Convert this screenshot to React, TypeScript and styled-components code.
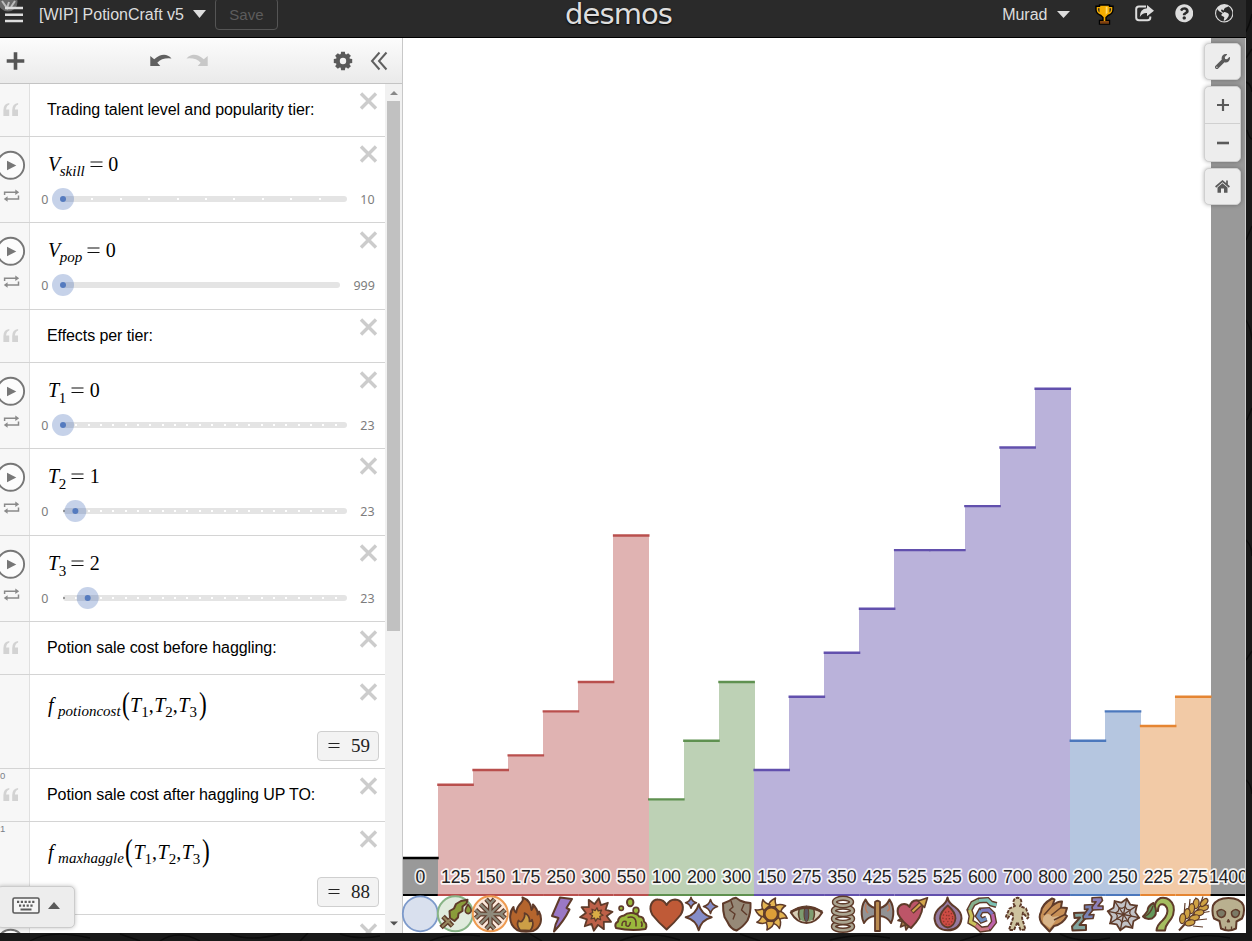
import React from "react";
import styled, { createGlobalStyle } from "styled-components";
import { FaWrench, FaQuestionCircle } from "react-icons/fa";
import { BsGlobeAmericas } from "react-icons/bs";

const sans = `"Liberation Sans", Arial, sans-serif`;
const serif = `"Liberation Serif", "Times New Roman", serif`;

const Global = createGlobalStyle`
  * { box-sizing: border-box; }
  body { margin: 0; background: #191919; overflow: hidden; font-family: ${sans}; }
  svg { display: block; flex: none; }
`;

/* ---------- frame ---------- */
const Screen = styled.div`
  position: relative;
  width: 1252px;
  height: 941px;
  overflow: hidden;
  background: #191919;
`;
const Texture = styled.svg`
  position: absolute;
  inset: 0;
`;
const Window = styled.div`
  position: relative;
  width: 1246px;
  height: 933px;
  display: flex;
  flex-direction: column;
  overflow: hidden;
  background: #fff;
`;
const Main = styled.main`
  flex: 1;
  min-height: 0;
  display: flex;
`;

/* ---------- header ---------- */
const Header = styled.header`
  height: 38px;
  flex: none;
  display: grid;
  grid-template-columns: 1fr 114px 1fr;
  background: #2a2a2a;
  border-bottom: 1px solid #000;
  color: #ddd;
`;
const HeaderLeft = styled.div`
  display: flex;
  align-items: flex-start;
`;
const HeaderRight = styled.div`
  display: flex;
  align-items: flex-start;
  justify-content: flex-end;
`;
const HeaderText = styled.span<{ $left: number }>`
  font-size: 16px;
  line-height: 18px;
  margin: 6px 0 0 ${(p) => p.$left}px;
  white-space: nowrap;
`;
const SaveButton = styled.button`
  width: 63px;
  height: 32px;
  margin: -2px 0 0 9px;
  padding: 1px 0 0;
  border: 1px solid #555;
  border-radius: 4px;
  background: transparent;
  color: #5c5c5c;
  font: 15px ${sans};
`;
const Logo = styled.div`
  font-family: "DejaVu Sans", sans-serif;
  font-size: 29px;
  line-height: 36px;
  letter-spacing: -0.9px;
  margin: -4px 0 0 -1px;
  color: #dedede;
  text-shadow: 0 1px 2px #000;
`;
const HeaderIcon = styled.span<{ $left: number; $top: number }>`
  margin: ${(p) => p.$top}px 0 0 ${(p) => p.$left}px;
`;

/* ---------- expression panel ---------- */
const Panel = styled.section`
  width: 403px;
  flex: none;
  display: flex;
  flex-direction: column;
  border-right: 1px solid #c8c8c8;
`;
const Toolbar = styled.div`
  height: 46px;
  flex: none;
  display: flex;
  align-items: center;
  padding-left: 6px;
  background: linear-gradient(#fcfcfc, #eaeaea);
  border-bottom: 1px solid #c4c4c4;
`;
const ToolIcon = styled.span<{ $left?: number }>`
  margin-left: ${(p) => p.$left ?? 0}px;
`;
const ListArea = styled.div`
  flex: 1;
  min-height: 0;
  display: flex;
`;
const List = styled.div`
  width: 385px;
  overflow: hidden;
`;
const Row = styled.div<{ $h: number }>`
  height: ${(p) => p.$h}px;
  display: flex;
  border-bottom: 1px solid #d4d4d4;
`;
const Gutter = styled.div`
  width: 30px;
  flex: none;
  position: relative;
  background: #f7f7f7;
  border-right: 1px solid #e0e0e0;
`;
const RowNumber = styled.span`
  position: absolute;
  left: 0;
  top: 1px;
  font-size: 9.5px;
  line-height: 11px;
  color: #7a7f88;
`;
const Body = styled.div`
  flex: 1;
  min-width: 0;
  display: flex;
  flex-direction: column;
`;
const BodyTop = styled.div`
  display: flex;
  justify-content: space-between;
  height: 52px;
  flex: none;
`;
const CloseSlot = styled.span`
  padding: 8px 7px 0 0;
`;
const NoteText = styled.p`
  margin: 16px 0 0 17px;
  font-size: 16px;
  line-height: 19px;
  letter-spacing: -0.08px;
  color: #000;
  white-space: nowrap;
`;
const Formula = styled.div<{ $top: number; $left: number }>`
  display: flex;
  align-items: baseline;
  height: 24px;
  margin: ${(p) => p.$top}px 0 0 ${(p) => p.$left}px;
  font: 20px/24px ${serif};
  color: #000;
  white-space: nowrap;
`;
const Var = styled.i<{ $l?: number }>`
  margin-left: ${(p) => p.$l ?? 0}px;
`;
const Sub = styled.span<{ $italic?: boolean; $l?: number }>`
  position: relative;
  top: ${(p) => (p.$italic ? 4.5 : 5.5)}px;
  font-size: 15px;
  font-style: ${(p) => (p.$italic ? "italic" : "normal")};
  margin-left: ${(p) => p.$l ?? 0}px;
`;
const Equals = styled.svg`
  margin: 0 5.5px 0 5px;
  align-self: center;
`;
const Paren = styled.span<{ $l: number }>`
  position: relative;
  top: 2.5px;
  font-size: 31px;
  line-height: 20px;
  width: 8px;
  transform: scaleX(0.75);
  margin-left: ${(p) => p.$l}px;
`;
const SliderLine = styled.div`
  display: flex;
  height: 22px;
  margin-top: -1px;
  align-items: center;
  justify-content: space-between;
  padding: 0 10px 0 11px;
  font: 13px/22px "Noto Sans", sans-serif;
  color: #7d7d7d;
`;
const Bound = styled.span`
  display: inline-block;
  transform: scaleX(0.96);
`;
const Track = styled.svg`
  overflow: visible;
  margin: 0 auto 0 15px;
`;
const Result = styled.div<{ $top: number }>`
  align-self: flex-end;
  width: 62px;
  height: 30px;
  margin: ${(p) => p.$top}px 6px 0 0;
  display: flex;
  align-items: center;
  justify-content: space-between;
  padding: 0 8px 1px 10px;
  background: #f3f3f3;
  border: 1px solid #cfcfcf;
  border-radius: 4px;
  font: 19px/26px ${serif};
  color: #222;
`;
const Scrollbar = styled.div`
  width: 17px;
  background: #f1f1f1;
  display: flex;
  flex-direction: column;
  align-items: center;
  justify-content: space-between;
  padding: 6px 0 7px;
`;
const Thumb = styled.div`
  width: 13px;
  height: 530px;
  margin: 5px 0 auto;
  background: #c1c1c1;
`;
const Keypad = styled.button`
  position: absolute;
  left: -3px;
  top: 886px;
  width: 78px;
  height: 42px;
  padding: 0 0 3px 14px;
  display: flex;
  align-items: center;
  gap: 8px;
  background: #ededed;
  border: 1px solid #ccc;
  border-radius: 5px;
  box-shadow: 0 0 4px rgba(0, 0, 0, 0.25);
`;

/* ---------- graph ---------- */
const Graph = styled.section`
  flex: 1;
  min-width: 0;
  display: flex;
  flex-direction: column;
  position: relative;
  background: #fff;
`;
const IconStrip = styled.div`
  display: flex;
  flex: 1;
`;
const Glyph = styled.svg`
  width: 35.125px;
  height: 37px;
  overflow: visible;
`;
const GraphTools = styled.div`
  position: absolute;
  top: 5px;
  right: 5px;
  display: flex;
  flex-direction: column;
  gap: 6px;
`;
const ToolGroup = styled.div`
  width: 37px;
  background: #ededed;
  border: 1px solid #d0d0d0;
  border-radius: 5px;
  box-shadow: 0 0 4px rgba(0, 0, 0, 0.3);
  color: #5a5a5a;
`;
const ToolButton = styled.div<{ $h?: number }>`
  height: ${(p) => p.$h ?? 35}px;
  display: flex;
  align-items: center;
  justify-content: center;
  & + & { border-top: 1px solid #d0d0d0; }
`;

/* ---------- small drawings ---------- */
const Close = () => (
  <CloseSlot>
    <svg width="19" height="18" viewBox="0 0 19 18">
      <path d="M2 1.5 17 16.5M17 1.5 2 16.5" stroke="#ccc" strokeWidth="3.4" />
    </svg>
  </CloseSlot>
);
const QuoteMark = () => (
  <svg width="30" height="52" viewBox="0 0 30 52">
    <g fill="#d3d3d3">
      <path d="M9.3 19v1.6Q6.4 21.6 6.1 25.5H9.2V32H3.4V26Q3.5 19.5 9.3 19Z" />
      <path d="M18.1 19v1.6Q15.2 21.6 14.9 25.5H18V32H12.2V26Q12.3 19.5 18.1 19Z" />
    </g>
  </svg>
);
const PlayControls = () => (
  <svg width="29" height="80" viewBox="0 0 29 80">
    <circle cx="10.6" cy="28.3" r="13.5" fill="#fcfcfc" stroke="#777" strokeWidth="1.9" />
    <path d="M7 23.8 16.3 28.5 7 33.2Z" fill="#777" />
    <g fill="none" stroke="#8a8a8a" strokeWidth="1.5">
      <path d="M4.6 58V55.3H17M18.5 58.5V62H6" />
    </g>
    <path d="M15.3 52.5 19.2 55.3 15.3 58ZM7.6 59.3 3.8 62 7.6 64.8Z" fill="#8a8a8a" />
  </svg>
);
const EqualSign = () => (
  <Equals width="13" height="8" viewBox="0 0 13 8">
    <path d="M.5 2H12.5M.5 6.5H12.5" stroke="#111" strokeWidth="1.1" />
  </Equals>
);

/* ---------- rows ---------- */
const Note = ({ text, num }: { text: string; num?: string }) => (
  <Row $h={53}>
    <Gutter>
      {num && <RowNumber>{num}</RowNumber>}
      <QuoteMark />
    </Gutter>
    <Body>
      <BodyTop>
        <NoteText>{text}</NoteText>
        <Close />
      </BodyTop>
    </Body>
  </Row>
);

type SliderProps = { h: number; v: string; sub: string; italic?: boolean; value: number; max: number; width?: number; ticks?: boolean };
const Slider = ({ h, v, sub, italic, value, max, width = 284, ticks = true }: SliderProps) => {
  const x = (value * width) / max;
  return (
    <Row $h={h}>
      <Gutter><PlayControls /></Gutter>
      <Body>
        <BodyTop>
          <Formula $top={15} $left={18}>
            <Var>{v}</Var>
            <Sub $italic={italic} $l={-0.5}>{sub}</Sub>
            <EqualSign />
            <span>{value}</span>
          </Formula>
          <Close />
        </BodyTop>
        <SliderLine>
          <Bound>0</Bound>
          <Track width={width} height="22">
            <rect y="8" width={width} height="6" rx="3" fill="#e4e4e4" />
            {ticks &&
              Array.from({ length: max - 1 }, (_, i) => (
                <rect key={i} x={Math.round(((i + 1) * width) / max)} y="10" width="2" height="2" fill="#fff" />
              ))}
            {value > 0 && <rect x="0" y="10" width="2" height="2" fill="#999" />}
            <circle cx={x} cy="11" r="11" fill="#2d5aae" fillOpacity=".27" />
            <circle cx={x} cy="11" r="3" fill="#557bbf" />
          </Track>
          <Bound>{max}</Bound>
        </SliderLine>
      </Body>
    </Row>
  );
};

const Call = ({ h, name, result, num }: { h: number; name: string; result: number; num?: string }) => (
  <Row $h={h}>
    <Gutter>{num && <RowNumber>{num}</RowNumber>}</Gutter>
    <Body>
      <BodyTop>
        <Formula $top={16.5} $left={18}>
          <Var>f</Var>
          <Sub $italic $l={4.5}>{name}</Sub>
          <Paren $l={0.5}>(</Paren>
          <Var $l={1}>T</Var><Sub>1</Sub><span>,</span>
          <Var $l={0.5}>T</Var><Sub>2</Sub><span>,</span>
          <Var $l={0.5}>T</Var><Sub>3</Sub>
          <Paren $l={1}>)</Paren>
        </Formula>
        <Close />
      </BodyTop>
      <Result $top={h === 94 ? 4 : 3}>
        <svg width="12" height="8" viewBox="0 0 12 8"><path d="M.5 1.5H11.5M.5 5.5H11.5" stroke="#222" strokeWidth="1.1" /></svg>
        <span>{result}</span>
      </Result>
    </Body>
  </Row>
);

/* ---------- chart ---------- */
const palette: Record<string, [string, string]> = {
  k: ["#999999", "#000000"],
  r: ["#e0b3b2", "#b94f4d"],
  g: ["#bdd1b5", "#5f9150"],
  p: ["#bab2da", "#6250ad"],
  b: ["#b5c6e0", "#4c78bd"],
  o: ["#f2caa6", "#e58532"],
};
const bars: [number, string][] = [
  [0, "k"], [125, "r"], [150, "r"], [175, "r"], [250, "r"], [300, "r"], [550, "r"],
  [100, "g"], [200, "g"], [300, "g"],
  [150, "p"], [275, "p"], [350, "p"], [425, "p"], [525, "p"], [525, "p"], [600, "p"], [700, "p"], [800, "p"],
  [200, "b"], [250, "b"], [225, "o"], [275, "o"], [1400, "k"],
];
const COL = 35.13;
const LEFT = -0.4;
const Chart = () => (
  <svg width="843" height="858" viewBox="0 38 843 858">
    {bars.map(([v, c], i) => {
      const y = 858 - 0.5865 * v;
      const x = i * COL + LEFT;
      return (
        <g key={i}>
          <rect x={x} y={y} width={COL + 0.7} height={896.5 - y} fill={palette[c][0]} shapeRendering="crispEdges" />
          <path d={`M${x} 895H${x + COL + 0.7}`} stroke={palette[c][1]} strokeWidth="2.2" />
        </g>
      );
    })}
    {bars.map(([v, c], i) => (
      <path key={i} d={`M${i * COL + LEFT - 0.5} ${858 - 0.5865 * v}H${(i + 1) * COL + LEFT + 1}`} stroke={palette[c][1]} strokeWidth="2.4" />
    ))}
    <g fontFamily="Liberation Sans, Arial, sans-serif" fontSize="17.7" letterSpacing="-0.2" textAnchor="middle" fill="#222" stroke="#fff" strokeOpacity=".85" strokeWidth="3.4" strokeLinejoin="round" paintOrder="stroke">
      {bars.map(([v], i) => (
        <text key={i} x={(i + 0.5) * COL - 0.2} y="882.7">{v}</text>
      ))}
    </g>
    <path d="M842.5 38V896" stroke="#ccc" strokeWidth="1" />
  </svg>
);

/* ---------- potion effect glyphs ---------- */
const ink = "#5f3b2a";
const star = (cx: number, cy: number, n: number, R: number, r: number, rot = 0) =>
  Array.from({ length: n * 2 }, (_, i) => {
    const a = (Math.PI * i) / n + rot - Math.PI / 2;
    const d = i % 2 ? r : R;
    return `${(cx + d * Math.cos(a)).toFixed(2)},${(cy + d * Math.sin(a)).toFixed(2)}`;
  }).join(" ");
const sparkle = (x: number, y: number, r: number) =>
  `M${x} ${y - r}Q${x + r * 0.2} ${y - r * 0.2} ${x + r} ${y}Q${x + r * 0.2} ${y + r * 0.2} ${x} ${y + r}Q${x - r * 0.2} ${y + r * 0.2} ${x - r} ${y}Q${x - r * 0.2} ${y - r * 0.2} ${x} ${y - r}Z`;
const ring = (n: number, off = 0) => Array.from({ length: n }, (_, i) => (360 / n) * i + off);
const flake = ring(8).map((a, i) => ({ a, d: i % 2 ? "M0 0V-14" : "M0 0V-11M-4.2-14.8 0-10.2 4.2-14.8" }));

const glyphs: React.ReactNode[] = [
  <circle cx="17.3" cy="17.8" r="17.5" fill="#d9e0ee" stroke="#7d9acb" strokeWidth="1.8" />,
  <>
    <circle cx="17.3" cy="17.8" r="17.5" fill="#e0ebdd" stroke="#88b487" strokeWidth="2" />
    <path d="M12 22 11.5 15 16 12.5 18 8 23 5 29.5 3.8 28.5 7.5 24.5 10.5 24.5 15 20.5 17.5 20 21.5 16.5 25Z" fill="#8a9c3a" />
    <path d="M30 8.5Q34 13 33 15.5 30.5 19.5 27.5 16 26.5 13.5 30 8.5Z" fill="#8a9c3a" strokeWidth="1.6" />
    <path d="M3 31.5 12 23.5M5 20.5 14.5 30" strokeWidth="5" fill="none" />
    <path d="M4 30.7 12 23.5M5.4 21 14 29.5" strokeWidth="2" stroke="#96875f" fill="none" />
  </>,
  <>
    <circle cx="17.3" cy="17.8" r="17.5" fill="#fce9dc" stroke="#ee9a50" strokeWidth="2" />
    <g transform="translate(17.3 18)" fill="none">
      {flake.map(({ a, d }) => <path key={a} d={d} transform={`rotate(${a})`} strokeWidth="4.8" />)}
      {flake.map(({ a, d }) => <path key={a} d={d} transform={`rotate(${a})`} stroke="#8f8b7c" strokeWidth="2.4" />)}
    </g>
  </>,
  <>
    <path d="M9 34Q1.500 29 2.200 20 2.500 14.500 5.500 11 6 15.500 8.200 16.500 8.800 11 13 7 15.800 4.400 14.500 1.500 23 4.500 23.500 14 25.500 12 25 8.500 30 13.500 29.500 18.500 31 18 31 15.500 34 21 32.500 27 30.500 33 25 35Q16 37 9 34Z" fill="#b5652d" />
    <path d="M12 34Q8 29 10.500 24.500 13 27 14.500 24.500 17.500 20.500 16.500 17 22 19.500 21.500 25.500 24 25 24 23.500 26.500 30 22 34.500Z" fill="#cc9e46" strokeWidth="1.7" />
  </>,
  <path d="M16 1.5 28 3 22.5 12 25.5 13.5Q20 25 10 35.5 11 28 14.5 22L8 20Z" fill="#9a78c6" />,
  <>
    <polygon points={star(17.3, 18.5, 10, 16.5, 10.5, 0.15)} fill="#bd6048" strokeWidth="1.8" />
    <polygon points={star(17.3, 18.5, 8, 6.8, 4, 0.1)} fill="#d9ac45" strokeWidth="1.3" />
  </>,
  <>
    <path d="M2 32Q0 27.500 4 25.500 4.500 20 10 19.500 13 16.500 18 17 23.500 17.500 25 20.500 30 20.500 30 25.500 34 28 31.500 33 17 35.500 2 32Z" fill="#9ab83c" />
    <path d="M8 30Q7.500 24.500 12 25.500V29.500Q15.500 32 16.500 26M13.500 21.500Q22 19.500 22 27V30.500M27 25.500Q29 28 27.500 31" fill="none" strokeWidth="1.5" />
    <ellipse cx="16.200" cy="6.300" rx="3.200" ry="3.900" fill="#9ab83c" />
    <circle cx="7.200" cy="12.300" r="2.200" fill="#9ab83c" strokeWidth="1.600" />
    <ellipse cx="22" cy="14.600" rx="2.900" ry="3.200" fill="#9ab83c" strokeWidth="1.600" />
  </>,
  <path d="M17.6 33.5Q9 26 3.5 19 0 13 2.3 8 4.5 3.3 9 3.5 14.8 3.6 17.6 9 20.500 3.500 26 3.500 31.500 3.700 33.400 8.500 35 13.500 31.500 19 26 26 17.600 33.500Z" fill="#bf5a37" />,
  <>
    <path d={sparkle(14.7, 21.3, 13)} fill="#858dc9" />
    <path d={sparkle(7, 6.8, 5.5)} fill="#858dc9" strokeWidth="1.5" />
    <path d={sparkle(26.5, 10.5, 7)} fill="#858dc9" strokeWidth="1.6" />
  </>,
  <>
    <path d="M4 7.5Q10 5.5 14 2.5L17 1.7 21 4.5Q26 7 31.5 7 32 17 28.5 24.5 24 31 17.5 34.5 11.5 33 8.5 26L5.5 21Q3.8 15 4 7.5Z" fill="#968977" />
    <path d="M12 5 14 11 10.5 14 16 18 14 23.5M25 8 22.500 14 28 19" fill="none" strokeWidth="1.4" />
  </>,
  <>
    {ring(8, 10).map((a) => (
      <path key={a} d="M-4-7Q-5-12 1.500-16.500 1-12 4.500-8Z" transform={`translate(17.2 18) rotate(${a})`} fill="#e3b452" strokeWidth="1.5" />
    ))}
    <circle cx="17.2" cy="18" r="6.6" fill="#dd9e38" />
  </>,
  <>
    <path d="M1.8 16.5Q9 10.5 17.5 10.5 26 10.5 33.2 16.5 27 27 17.5 27 8 27 1.8 16.5Z" fill="#d8ccb4" />
    <ellipse cx="17.4" cy="18" rx="9" ry="7.6" fill="#7e9c70" stroke="none" />
    <ellipse cx="17.4" cy="18" rx="2.4" ry="7.8" fill="#5b5963" strokeWidth="1" />
    <path d="M10.5 12.5Q8.5 18 11 24M24.5 12.5Q26.5 18 24 24" fill="none" strokeWidth="1.4" />
    <path d="M1.8 16Q17 7.500 33.2 16" fill="none" strokeWidth="2.6" />
  </>,
  <g fill="none">
    {[30.5, 22.7, 14.7, 6].map((y, i) => (
      <React.Fragment key={y}>
        <ellipse cx="18" cy={y} rx={i === 3 ? 8.5 : 9.5} ry="3.7" strokeWidth="5.4" />
        <ellipse cx="18" cy={y} rx={i === 3 ? 8.5 : 9.5} ry="3.7" stroke="#aba591" strokeWidth="2.6" />
      </React.Fragment>
    ))}
  </g>,
  <>
    <path d="M15 12Q9 11 5.500 3.500 1 10 1.800 19 2 23 4 27 8 20.500 15 20ZM20 12Q26 11 29.500 3.500 34 10 33.200 19 33 23 31 27 27 20.500 20 20Z" fill="#929294" />
    <path d="M6 8Q4.500 14 8 17M28.500 8Q31 14 27 15" stroke="#c07a5a" strokeWidth="1.500" fill="none" />
    <path d="M15 6Q17.500 3.500 20 6V35H15Z" fill="#b98b50" strokeWidth="1.800" />
  </>,
  <>
    <path d="M10 20 3 24.5 7 25.5 5.500 31 10 29 11 34 17 26Z" fill="#a37d48" strokeWidth="1.6" />
    <path d="M16 32Q7 26 3 18 1.500 11 6.500 8.500 11.500 7 14.500 11 16 4.500 21.500 4.200 27 4.500 27.500 11 27 21 16 32Z" fill="#bd5568" />
    <path d="M17 16 25 8.500" strokeWidth="4.600" />
    <path d="M17.500 15.500 25.500 8" stroke="#d3a64c" strokeWidth="2.200" />
    <path d="M32.500 1.800 23 5 29.500 11.500Z" fill="#d3a64c" strokeWidth="1.600" />
  </>,
  <>
    <path d="M17.5 1.5Q18.5 7 25 11 31.7 16 31.5 22.5 30 34 17.8 34.3 5.5 34 4.5 22.5 4.5 16 10.5 11 16.5 7 17.5 1.5Z" fill="#957aa0" />
    <path d="M17.8 9.5Q25.500 16 25.500 22.500 24.500 30.500 17.800 31.500 11 30.500 10 22.500 10 16 17.800 9.500Z" fill="#cd4c44" strokeWidth="1.8" />
    <ellipse cx="17.8" cy="22" rx="4.8" ry="6.500" fill="none" stroke="#8a332c" strokeWidth="1.3" strokeDasharray="1.3 2" />
    <ellipse cx="17.8" cy="22" rx="1.6" ry="3.500" fill="none" stroke="#8a332c" strokeWidth="1.3" strokeDasharray="1.3 2" />
  </>,
  <g fill="none" strokeLinejoin="miter">
    <path d="M31.500 9 26 7.500 22.500 4 14 4.500 8 7.500 4.500 14 6.500 20 5.500 26 11 29 16 33.500 24 32.500 29 26 27.500 18 23.500 14 16 14.500 13 20 16.500 24.500 21.500 22.500" strokeWidth="6" />
    <path d="M31.500 9 26 7.500 22.500 4 14 4.500" stroke="#7cc1b4" strokeWidth="3.200" />
    <path d="M14 4.500 8 7.500 4.500 14" stroke="#86b08c" strokeWidth="3.200" />
    <path d="M4.500 14 6.500 20 5.500 26 11 29" stroke="#c9c05a" strokeWidth="3.200" />
    <path d="M11 29 16 33.500 24 32.500" stroke="#cf7a86" strokeWidth="3.200" />
    <path d="M24 32.500 29 26 27.500 18" stroke="#bd63aa" strokeWidth="3.200" />
    <path d="M27.500 18 23.500 14 16 14.500" stroke="#7d78c0" strokeWidth="3.200" />
    <path d="M16 14.500 13 20 16.500 24.500 21.500 22.500" stroke="#6f8fc0" strokeWidth="3.200" />
  </g>,
  <path d="M15 10Q13 8 13.5 5.2 14.5 1.7 17.5 1.8 20.8 2 21.3 5.2 21.5 8.3 20 10.2L26 12.5 29 20.5 27.5 22.5 23 16.5 22 22 25.5 33.5 20.5 34 17.5 26 14 34H9L13 22 12.5 16 7.5 22.5 6 20.5 9.5 12.5Z" fill="#cec39f" strokeDasharray="3.4 1.2" strokeWidth="1.9" />,
  <>
    <path d="M6.500 27Q3 21 6 16 7 8 17 2.500L19.500 3.500 17.500 9.500Q23 5 27 5.500L26 11.500 32 12 30 18.500 32 20Q28 28 19 30L14.500 35.500Z" fill="#c78f56" />
    <path d="M8.500 27.500Q6.500 21 11 18.500 15 17 17.500 21L24 20Q20 26 15 32Z" fill="#d9b58a" stroke="none" />
    <path d="M17.500 9.500 9 19M26 11.500 16 19.500M30 18.500 19 24" fill="none" strokeWidth="1.500" />
  </>,
  <>
    <path d="M4 17 16 16.5 17 20.5 9.5 29 16 29V34L2.5 34.5 2 30.5 10 21.5 4.5 22Z" fill="#81a49e" />
    <path d="M14.5 9 23.5 8.5 24.5 12 19 19 24 18.5 23 22.5 13.5 23 13 20 18 13 14.5 13.5Z" fill="#7882b4" strokeWidth="1.6" />
    <path d="M22 1.8 31.5 1.3 32.5 4.5 28 10 33 10V13.5L22.5 14 22 11 26 5.7 22 6Z" fill="#8d80ba" strokeWidth="1.6" />
  </>,
  <g fill="none">
    <polygon points={star(17.5, 18.5, 8, 16, 12, 0.2)} fill="#c2c2c6" strokeWidth="1.8" />
    <g transform="translate(17.5 18.5)">
      {ring(8, 11.5).map((a) => <path key={a} d="M0 0V-17" transform={`rotate(${a})`} strokeWidth="1.3" />)}
    </g>
    <polygon points={star(17.5, 18.5, 8, 8, 6.3, 0.2)} strokeWidth="1.2" />
  </g>,
  <>
    <path d="M13.500 15Q12.500 5 19.500 2 29 .500 32.500 10 34.500 19 27 27 24.500 30 24 34.500L15.500 34.500Q16 29 21.500 24.500 28 18 26 12 23.500 7 19.500 8.500 17 10 17 15Z" fill="#a5bd60" />
    <path d="M12.500 7Q6.500 10 6.500 15 4 18.500 2 20.500 5 24 11 22.500 16.500 19 14.500 12Z" fill="#64985a" />
    <path d="M4 20.500Q10 17 12 10" fill="none" strokeWidth="1.300" />
  </>,
  <>
    <path d="M3 34.500 28 7" strokeWidth="2" />
    <path d="M9 7 8 20M14 3 13 14M20 1.500 18.500 8M27 .500 25 6M33 9 28 10M33.500 15.500 25 17M31 23 21 24M27 31 17 30" strokeWidth="1.200" />
    {[[22.5, 8.5], [18, 13.5], [13.5, 18.5], [9, 23.5]].map(([x, y], i) => (
      <g key={i} fill="#cfa244" strokeWidth="1.300">
        <ellipse cx={x - 2.5} cy={y - 0.5} rx="2.900" ry="5" transform={`rotate(8 ${x} ${y})`} />
        <ellipse cx={x + 4} cy={y + 4.5} rx="5" ry="2.900" transform={`rotate(-14 ${x} ${y})`} />
      </g>
    ))}
    <ellipse cx="28" cy="6.500" rx="2.600" ry="4.800" transform="rotate(42 28 6.500)" fill="#cfa244" strokeWidth="1.300" />
  </>,
  <>
    <path d="M8.5 25 3 22.5Q.5 17 2 9.5 6 2 17.5 2 29 2 32.5 9.5 34 17 31 22.5L25.5 25.5 25 32.5Q17.5 36.5 10 32.5Z" fill="#b9b08f" />
    <path d="M6 15.5Q11 11.5 14.5 16 15 20.5 10.5 21.5 6 21 6 15.5ZM28.5 15.5Q24 11.5 20.5 16 20 20.5 24 21.5 28.5 21 28.5 15.5Z" fill="#7b7a66" strokeWidth="1.5" />
    <path d="M17.4 23 16 26H18.8Z" fill={ink} strokeWidth="1" />
    <path d="M14.500 30.500V33.500M20.500 30.500V33.500" strokeWidth="1.3" />
  </>,
];

export default function App() {
  return (
    <Screen>
      <Global />
      <Texture width="1252" height="941">
        <g fill="none" stroke="#0c0c0c" strokeWidth="1.4">
          <path d="M1246 32q4-8 6-18M1246 58l6-9M1246 82q5 2 6 10M1247 130q2 8 5 9M1246 240l6-14M1246 320q5 8 6 20M1247 420l5-12M1246 540q6 6 6 16M1246 660l6-9M1246 780q5 4 6 14" />
          <path d="M30 941q20-12 60-3M120 934l20 7M160 941q18-12 40 0M230 934q20 8 50 0M300 941l8-8M340 934q18 6 40 2M430 941q20-9 50-5M530 934l12 7M620 941q26-12 60-1M740 934l20 7M830 940q30-8 60-2M960 941l22-7M1060 934q20 10 50 4M1180 941q20-9 50-3" />
        </g>
      </Texture>
      <Window>
        <Header>
          <HeaderLeft>
            <svg width="30" height="30" viewBox="0 0 30 30">
              <circle cx="8" cy="2" r="9.5" fill="#686868" />
              <path d="M2 1 7 8 9 2M11 7 15 1" stroke="#bcbcbc" strokeWidth="2" fill="none" />
              <path d="M5 8H23M5 14.7H23M5 21H23" stroke="#ddd" strokeWidth="2.6" />
            </svg>
            <HeaderText $left={9}>[WIP] PotionCraft v5</HeaderText>
            <HeaderIcon $left={9} $top={10}>
              <svg width="13" height="8" viewBox="0 0 13 8"><path d="M0 0H13L6.5 8Z" fill="#ddd" /></svg>
            </HeaderIcon>
            <SaveButton>Save</SaveButton>
          </HeaderLeft>
          <Logo>desmos</Logo>
          <HeaderRight>
            <HeaderText $left={0}>Murad</HeaderText>
            <HeaderIcon $left={9} $top={11}>
              <svg width="13" height="7" viewBox="0 0 13 7"><path d="M0 0H13L6.5 7Z" fill="#ddd" /></svg>
            </HeaderIcon>
            <HeaderIcon $left={25.5} $top={4}>
              <svg width="19" height="22" viewBox="0 0 19 22">
                <path d="M4.5 1H14.5V2.3H18V6Q17.5 10 13 11.5L11 13.5V16.5H14.5V20H4.5V16.5H8V13.5L6 11.5Q1.5 10 1 6V2.3H4.5Z" fill="#f5ad00" stroke="#000" strokeWidth="1.4" />
                <path d="M3 4.2H4.5V8.5Q3 7.5 3 5.5ZM16 4.2H14.5V8.5Q16 7.5 16 5.5Z" fill="#2a2a2a" />
                <path d="M10.7 2.7H12.5V8.7L10.7 10.7Z" fill="#ffda69" />
                <path d="M5 17.2H14V19.5H5Z" fill="#7c3c12" />
              </svg>
            </HeaderIcon>
            <HeaderIcon $left={20.5} $top={5}>
              <svg width="19" height="17" viewBox="0 0 19 17">
                <path d="M11 1.5H4Q1.2 1.5 1.2 4.2V12.5Q1.2 15.3 4 15.3H12.5Q15.3 15.3 15.3 12.5V11.5" fill="none" stroke="#ddd" strokeWidth="2" />
                <path d="M12 0 19 5.7 12 11.3V8Q7.5 7.6 4.8 12 4.8 4 12 3.3Z" fill="#ddd" />
              </svg>
            </HeaderIcon>
            <HeaderIcon $left={21} $top={4}><FaQuestionCircle size={18.5} color="#ddd" /></HeaderIcon>
            <HeaderIcon $left={21.5} $top={4}><BsGlobeAmericas size={18.5} color="#ddd" /></HeaderIcon>
            <HeaderIcon $left={13} $top={0} />
          </HeaderRight>
        </Header>
        <Main>
          <Panel>
            <Toolbar>
              <ToolIcon>
                <svg width="19" height="18" viewBox="0 0 19 18"><path d="M.7 9H18.3M9.5.2V17.8" stroke="#555" strokeWidth="3.6" /></svg>
              </ToolIcon>
              <ToolIcon $left={125}>
                <svg width="22" height="14" viewBox="0 0 22 14"><path d="M.3 2V12H10.3L7.3 8.8Q12 3.5 21.5 4.5 14.5-3.3 4.2 5.2Z" fill="#606060" /></svg>
              </ToolIcon>
              <ToolIcon $left={14}>
                <svg width="22" height="14" viewBox="0 0 22 14"><path d="M21.7 2V12H11.7L14.7 8.8Q10 3.5.5 4.5 7.5-3.3 17.8 5.2Z" fill="#c8c8c8" /></svg>
              </ToolIcon>
              <ToolIcon $left={125}>
                <svg width="20" height="20" viewBox="-10 -10 20 20">
                  <circle r="5.2" fill="none" stroke="#5a5a5a" strokeWidth="4" />
                  {ring(8).map((a) => <path key={a} d="M-2.4-6 -1.9-9.2H1.9L2.4-6Z" fill="#5a5a5a" transform={`rotate(${a})`} />)}
                </svg>
              </ToolIcon>
              <ToolIcon $left={17}>
                <svg width="18" height="20" viewBox="0 0 18 20"><path d="M9.5 1.5 2 10 9.5 18.5M16.5 1.5 9 10 16.5 18.5" fill="none" stroke="#606060" strokeWidth="2" /></svg>
              </ToolIcon>
            </Toolbar>
            <ListArea>
              <List>
                <Note text="Trading talent level and popularity tier:" />
                <Slider h={86} v="V" sub="skill" italic value={0} max={10} />
                <Slider h={87} v="V" sub="pop" italic value={0} max={999} width={277} ticks={false} />
                <Note text="Effects per tier:" />
                <Slider h={86} v="T" sub="1" value={0} max={23} />
                <Slider h={87} v="T" sub="2" value={1} max={23} />
                <Slider h={86} v="T" sub="3" value={2} max={23} />
                <Note text="Potion sale cost before haggling:" />
                <Call h={94} name="potioncost" result={59} />
                <Note text="Potion sale cost after haggling UP TO:" num="0" />
                <Call h={93} name="maxhaggle" result={88} num="1" />
                <Row $h={86}>
                  <Gutter><PlayControls /></Gutter>
                  <Body>
                    <BodyTop>
                      <Formula $top={15} $left={13}><Var>f</Var></Formula>
                      <Close />
                    </BodyTop>
                  </Body>
                </Row>
              </List>
              <Scrollbar>
                <svg width="8" height="6" viewBox="0 0 8 6"><path d="M0 5 4 1 8 5Z" fill="#888" /></svg>
                <Thumb />
                <svg width="8" height="5" viewBox="0 0 8 5"><path d="M0 .5H8L4 4.5Z" fill="#505050" /></svg>
              </Scrollbar>
            </ListArea>
          </Panel>
          <Graph>
            <Chart />
            <IconStrip>
              {glyphs.map((g, i) => (
                <Glyph key={i} viewBox="0 0 35.125 37" stroke={ink} strokeWidth="2" strokeLinejoin="round">{g}</Glyph>
              ))}
            </IconStrip>
            <GraphTools>
              <ToolGroup><ToolButton><FaWrench size={15} /></ToolButton></ToolGroup>
              <ToolGroup>
                <ToolButton $h={36}>
                  <svg width="12" height="12" viewBox="0 0 12 12"><path d="M0 6H12M6 0V12" stroke="#5a5a5a" strokeWidth="2.2" /></svg>
                </ToolButton>
                <ToolButton $h={38}>
                  <svg width="12" height="4" viewBox="0 0 12 4"><path d="M0 2H12" stroke="#5a5a5a" strokeWidth="2.6" /></svg>
                </ToolButton>
              </ToolGroup>
              <ToolGroup>
                <ToolButton>
                  <svg width="15" height="13" viewBox="0 0 15 13">
                    <path d="M.6 7 7.5 1.2 14.4 7M12 .5V4.5" fill="none" stroke="#5a5a5a" strokeWidth="1.7" />
                    <path d="M2.5 7.5 7.5 3.3 12.5 7.5V12.8H9V8.5H6V12.8H2.5Z" fill="#5a5a5a" />
                  </svg>
                </ToolButton>
              </ToolGroup>
            </GraphTools>
          </Graph>
        </Main>
        <Keypad>
          <svg width="28" height="17" viewBox="0 0 28 17">
            <rect x="1" y="1" width="26" height="15" rx="1.5" fill="#f5f5f5" stroke="#5a5a5a" strokeWidth="1.6" />
            <path d="M5 4.8H24M7 8.7H22" stroke="#5a5a5a" strokeWidth="2.2" strokeDasharray="2.2 1.6" />
            <path d="M8.5 12.5H19.5" stroke="#5a5a5a" strokeWidth="2" />
          </svg>
          <svg width="12" height="7" viewBox="0 0 12 7"><path d="M0 7 6 0 12 7Z" fill="#5a5a5a" /></svg>
        </Keypad>
      </Window>
    </Screen>
  );
}
